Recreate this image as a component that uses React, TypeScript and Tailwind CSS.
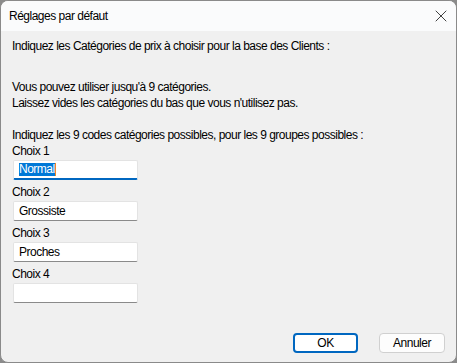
import { X } from "lucide-react";

const choices = [
  { label: "Choix 1", value: "Normal", focused: true },
  { label: "Choix 2", value: "Grossiste" },
  { label: "Choix 3", value: "Proches" },
  { label: "Choix 4", value: "" },
];

function ChoiceField({
  label,
  value,
  focused,
}: {
  label: string;
  value: string;
  focused?: boolean;
}) {
  return (
    <div className="flex flex-col">
      <div className="h-[16px] leading-[16px]">{label}</div>
      <div
        className={`mt-[1px] ml-[1px] w-[125px] h-[20px] bg-white rounded-[2px] flex items-center pl-[5px] border border-[#e3e3e3] ${
          focused ? "border-b-2 border-b-[#0067c0]" : "border-b-[#8a8a8a]"
        }`}
      >
        {focused ? (
          <span className="flex items-center">
            <span className="bg-[#0078d7] text-white leading-[13px]">
              {value}
            </span>
            <span className="w-[1px] h-[13px] bg-[#f08a24]" />
          </span>
        ) : (
          <span className="leading-[16px]">{value}</span>
        )}
      </div>
    </div>
  );
}

export default function App() {
  return (
    <div className="w-[457px] h-[363px] bg-[#8b8b8b] font-['Liberation_Sans',Arial,sans-serif] text-[12px] tracking-[-0.5px] text-black">
      <div className="w-full h-full rounded-[8px] border border-[#8a8a8a] overflow-hidden flex flex-col bg-[#f0f0f0]">
        {/* Title bar */}
        <div className="h-[30px] bg-[#fafbfc] flex items-center justify-between pl-[8px] pr-[5px] shrink-0">
          <span className="leading-[16px]">Réglages par défaut</span>
          <X className="w-[20px] h-[20px] text-[#1a1a1a]" strokeWidth={1} />
        </div>

        {/* Body */}
        <div className="flex-1 flex flex-col pl-[11px] pt-[7px] leading-[16px]">
          <p>Indiquez les Catégories de prix à choisir pour la base des Clients :</p>

          <div className="mt-[25px]">
            <p>Vous pouvez utiliser jusqu'à 9 catégories.</p>
            <p>Laissez vides les catégories du bas que vous n'utilisez pas.</p>
          </div>

          <p className="mt-[16px]">
            Indiquez les 9 codes catégories possibles, pour les 9 groupes possibles :
          </p>

          <div className="flex flex-col gap-[4px]">
            {choices.map((c) => (
              <ChoiceField key={c.label} {...c} />
            ))}
          </div>

          <div className="mt-auto mb-[9px] flex justify-end gap-[21px] pr-[11px]">
            <button className="w-[65px] h-[20px] rounded-[4px] bg-white border-2 border-[#0067c0] leading-[14px]">
              OK
            </button>
            <button className="w-[66px] h-[20px] rounded-[4px] bg-[#fdfdfd] border border-[#d0d0d0] leading-[16px]">
              Annuler
            </button>
          </div>
        </div>
      </div>
    </div>
  );
}
